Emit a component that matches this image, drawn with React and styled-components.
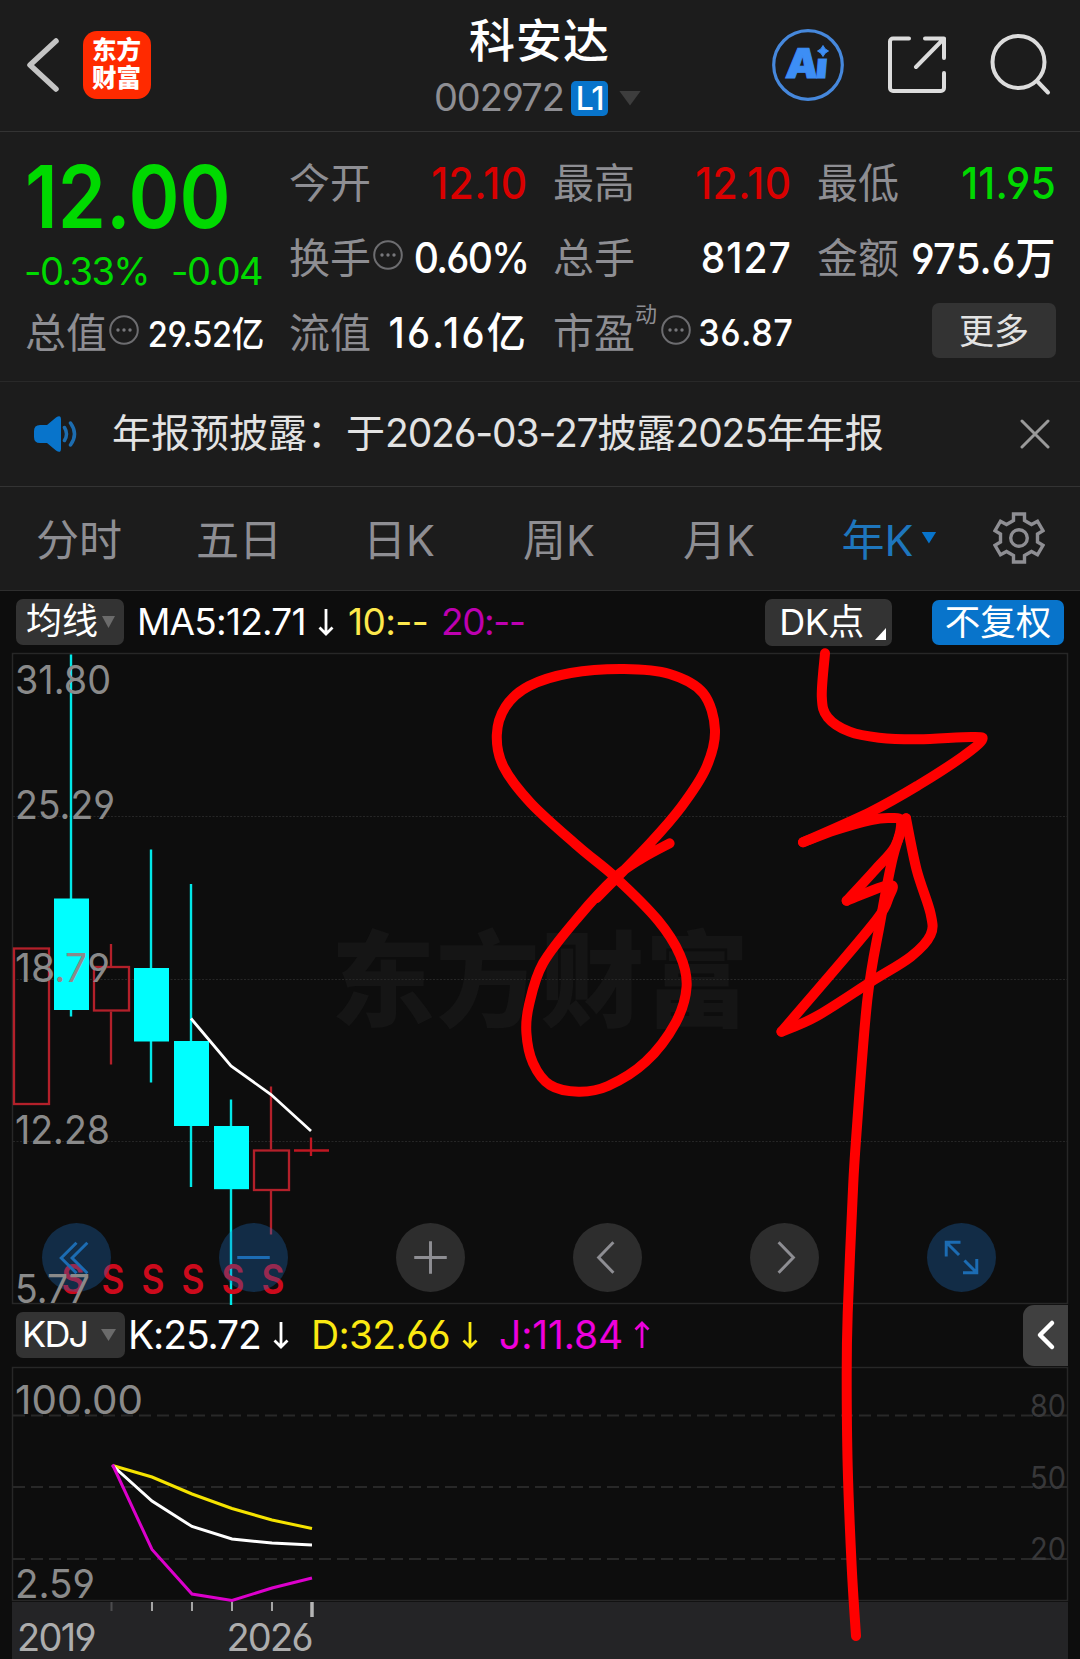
import React from 'react'
import styled, { createGlobalStyle } from 'styled-components'

const GREEN = '#00d900'
const RED = '#d90000'
const GREY = '#8e8e93'
const BLUE = '#0874cb'
const CYAN = '#00ffff'
const CANDLE_RED = '#b3202a'
const FONT = "Inter, 'Noto Sans CJK SC', sans-serif"

// yearly candles, in chart pixels
const candles = [
    { x: 31.5, up: true, top: 947, bottom: 1104.5, high: 947, low: 1104 },
    { x: 71, up: false, top: 898, bottom: 1009.5, high: 654, low: 1016 },
    { x: 111.5, up: true, top: 965.5, bottom: 1011, high: 943.5, low: 1064 },
    { x: 151, up: false, top: 967.5, bottom: 1041, high: 849, low: 1082 },
    { x: 191, up: false, top: 1040.5, bottom: 1125.5, high: 883.5, low: 1186.5 },
    { x: 231, up: false, top: 1125.5, bottom: 1188.7, high: 1099, low: 1304.5 },
    { x: 271.5, up: true, top: 1149, bottom: 1190.5, high: 1086, low: 1234 },
]

const priceLabels = [
    { text: '31.80', y: 693, x: 15, width: 96 },
    { text: '25.29', y: 818, x: 15, width: 100 },
    { text: '18.79', y: 981, x: 15, width: 95 },
    { text: '12.28', y: 1143, x: 15, width: 95 },
]

const figureEight = [
    [669.6, 843.3], [642, 858.3], [615.4, 877.3], [578.6, 916.7], [543, 963.3], [529, 1005], [526.4, 1033],
    [533, 1063], [550, 1085], [578.6, 1091.7], [608, 1086], [645.8, 1061.7], [675.5, 1023], [686.6, 986.7],
    [680, 955], [657.7, 920], [615.4, 877.3], [578.6, 846.7], [531, 803.3], [503.5, 766.7], [496.8, 735],
    [505.5, 706.7], [529, 686], [570.7, 673], [624, 669], [669.6, 674], [703, 693], [715, 730],
    [706, 768], [681.4, 806.7], [650, 843.3], [596.4, 898.3],
]

// each entry is one smooth run, the runs meet in sharp corners
const yearStroke = [
    [[825, 653.3], [821.8, 696.7], [827.7, 717.3], [849.5, 731.7], [879, 737.7], [918.7, 739.3], [972, 737], [982, 740], [962, 757], [918.7, 785], [871, 811.7], [803, 842.3]],
    [[803, 842.3], [835.6, 830], [871, 820], [891, 818], [901, 821.7], [895, 846.7], [875, 870], [846.7, 900.7]],
    [[846.7, 900.7], [889, 885], [889, 896.7], [871, 926.7], [781.5, 1031.7]],
    [[781.5, 1031.7], [815.9, 1016.7], [871, 981.7], [910.8, 956.7], [930.5, 935], [930.5, 913.3], [916.7, 870], [906, 818.3]],
    [[906, 818.3], [893, 856.7], [880, 923.3], [867.3, 1000], [856, 1140], [852.5, 1200], [847.7, 1313], [846.7, 1373], [847.7, 1466.7], [851.7, 1566.7], [856, 1636]],
]

const smooth = (pts) => {
    let d = `M${pts[0][0]} ${pts[0][1]}`
    for (let i = 0; i < pts.length - 1; i++) {
        const p0 = pts[i - 1] || pts[i]
        const p1 = pts[i]
        const p2 = pts[i + 1]
        const p3 = pts[i + 2] || p2
        d += `C${p1[0] + (p2[0] - p0[0]) / 6} ${p1[1] + (p2[1] - p0[1]) / 6} ${p2[0] - (p3[0] - p1[0]) / 6} ${p2[1] - (p3[1] - p1[1]) / 6} ${p2[0]} ${p2[1]}`
    }
    return d
}

const Candle = ({ x, up, top, bottom, high, low }) => {
    if (up) {
        return (
            <g stroke={CANDLE_RED} strokeWidth="2.300" fill="none">
                <rect x={x - 17.5} y={top + 1} width="35" height={bottom - top - 2} />
                <path d={`M${x - 0.5} ${high}V${top}M${x - 0.5} ${bottom}V${low}`} />
            </g>
        )
    }
    return (
        <g>
            <rect x={x - 1.2} y={high} width="2.400" height={low - high} fill={CYAN} opacity="0.9" />
            <rect x={x - 17} y={top} width="35" height={bottom - top} fill={CYAN} />
        </g>
    )
}

const MoreDots = () => (
    <DotsIcon viewBox="0 0 30 30">
        <circle cx="15" cy="15" r="13.8" fill="none" stroke="#6d6d70" strokeWidth="2" />
        <circle cx="9" cy="15" r="1.7" fill="#77777b" />
        <circle cx="15" cy="15" r="1.7" fill="#77777b" />
        <circle cx="21" cy="15" r="1.7" fill="#77777b" />
    </DotsIcon>
)

const Stat = ({ label, sup, info, value, color, size = 42, spacing = 1 }) => (
    <StatCell>
        <Label>{label}</Label>
        {sup && <Sup>{sup}</Sup>}
        {info && <MoreDots />}
        <Value $color={color} $size={size} $spacing={spacing}>{value}</Value>
    </StatCell>
)

const Arrow = ({ up, color }) => (
    <ArrowIcon viewBox="0 0 16 28">
        <path
            d={up ? 'M8 27V2M1.5 8.5L8 2l6.500 6.500' : 'M8 1v25M1.500 19.500L8 26l6.500-6.500'}
            fill="none" stroke={color} strokeWidth="2.8"
        />
    </ArrowIcon>
)

const App = () => {
    return (
        <Page>
            <GlobalStyle />
            <Header>
                <BackIcon viewBox="0 0 34 56">
                    <path d="M30 4L4 28l26 24" fill="none" stroke="#c4c4c4" strokeWidth="5.500" strokeLinecap="round" strokeLinejoin="round" />
                </BackIcon>
                <Logo>
                    <span>东方</span>
                    <span>财富</span>
                </Logo>
                <Title>
                    <h1>科安达</h1>
                    <CodeRow>
                        <span>002972</span>
                        <Level>L1</Level>
                        <Triangle $w={22} $h={15} $color="#3d3d3d" />
                    </CodeRow>
                </Title>
                <Actions>
                    <svg width="72" height="72" viewBox="0 0 72 72">
                        <circle cx="36" cy="36" r="34.300" fill="none" stroke="#4688dc" strokeWidth="3.200" />
                        <text y="49" fontSize="41" fontWeight="900" fill="#3d8ef5" stroke="#3d8ef5" transform="translate(4 0) skewX(-5)">
                            <tspan x="13">A</tspan>
                            <tspan x="43">i</tspan>
                        </text>
                        <rect x="43" y="16" width="15" height="13.500" fill="#1c1c1c" />
                        <path d="M51 16.500q1.500 4 5.500 5.500q-4 1.500-5.500 5.500q-1.500-4-5.500-5.500q4-1.500 5.500-5.500z" fill="#3d8ef5" stroke="#3d8ef5" />
                    </svg>
                    <svg width="58" height="58" viewBox="0 0 58 58" fill="none" stroke="#dcdcdc" strokeWidth="4" strokeLinecap="round" strokeLinejoin="round">
                        <path d="M21 2.500H5a3 3 0 0 0-3 3V52a3 3 0 0 0 3 3h48a3 3 0 0 0 3-3V37" />
                        <path d="M37 2.500h19V22M56 2.500L28 31" />
                    </svg>
                    <svg width="62" height="62" viewBox="0 0 62 62" fill="none" stroke="#dcdcdc" strokeWidth="4" strokeLinecap="round">
                        <circle cx="28.500" cy="28" r="26" />
                        <path d="M47 47l11 11.500" />
                    </svg>
                </Actions>
            </Header>

            <Quote>
                <PriceBlock>
                    <Price>12.00</Price>
                    <Change>
                        <span>-0.33%</span>
                        <span>-0.04</span>
                    </Change>
                </PriceBlock>
                <Stat label="今开" value="12.10" color={RED} size={44} spacing={0.4} />
                <Stat label="最高" value="12.10" color={RED} size={44} spacing={0.4} />
                <Stat label="最低" value="11.95" color={GREEN} size={44} spacing={0.2} />
                <Stat label="换手" info value="0.60%" spacing={-1.8} />
                <Stat label="总手" value="8127" />
                <Stat label="金额" value="975.6万" size={43} spacing={0.1} />
                <Stat label="总值" info value="29.52亿" size={35} spacing={-0.4} />
                <Stat label="流值" value="16.16亿" spacing={2.4} />
                <Stat label="市盈" sup="动" info value="36.87" size={37} spacing={0.5} />
                <MoreButton>更多</MoreButton>
            </Quote>

            <Notice>
                <svg width="44" height="38" viewBox="0 0 44 38">
                    <path d="M6 10h7L22 2.500q5-3.500 5 2v29q0 5.500-5 2L13 28H6q-6 0-6-6v-6q0-6 6-6z" fill={BLUE} />
                    <path d="M30.500 12.500q4 6.500 0 13M36.500 8q8 11 0 22" fill="none" stroke="#1d6db0" strokeWidth="3.500" strokeLinecap="round" />
                </svg>
                <NoticeText>
                    年报预披露：于<Digits>2026-03-27</Digits>披露<Digits>2025</Digits>年年报
                </NoticeText>
                <svg width="30" height="30" viewBox="0 0 30 30">
                    <path d="M2 2l26 26M28 2L2 28" stroke="#9a9a9a" strokeWidth="3" strokeLinecap="round" />
                </svg>
            </Notice>

            <Tabs>
                <Tab>分时</Tab>
                <Tab>五日</Tab>
                <Tab>日K</Tab>
                <Tab>周K</Tab>
                <Tab>月K</Tab>
                <Tab $active>年K<Triangle $w={15} $h={12} $color={BLUE} /></Tab>
                <GearCell>
                    <svg width="52" height="52" viewBox="0 0 52 52" fill="none" stroke={GREY} strokeWidth="3.400">
                        <path d="M20.500 2h11v6.500l7 4 6-3.300 5.500 9.500-5.500 3.300v8l5.500 3.300-5.500 9.500-6-3.300-7 4V50h-11v-6.500l-7-4-6 3.300L2 33.300 7.500 30v-8L2 18.700l5.500-9.500 6 3.300 7-4z" />
                        <circle cx="26" cy="26" r="8.300" />
                    </svg>
                </GearCell>
            </Tabs>

            <IndicatorBar $height={62}>
                <Picker $width={108}>均线<Triangle $w={13} $h={12} $color="#6b6b6b" /></Picker>
                <Reading $color="#fff" $left={13} $width={181}>MA5:12.71</Reading>
                <Arrow color="#fff" />
                <Reading $color="#fde84c" $left={14} $width={93} $spacing={-0.6}>10:--</Reading>
                <Reading $color="#bd00b0" $left={0} $width={90} $spacing={-1.4}>20:--</Reading>
                <DkButton>DK点</DkButton>
                <AdjustButton>不复权</AdjustButton>
            </IndicatorBar>

            <ChartWrap>
                <ChartCanvas width="1080" height="650" viewBox="0 652.500 1080 650">
                    <text x="331" y="1018" fontSize="104" fontWeight="900" fill="#151515" textLength="418">东方财富</text>
                    <path d="M12.500 1303V653H1067.500V1303z" fill="none" stroke="#272727" strokeWidth="1.500" />
                    <path d="M13 816H1067M13 979H1067M13 1141H1067" stroke="#262626" strokeDasharray="2 1.500" />
                    {candles.map((c) => <Candle key={c.x} {...c} />)}
                    <path d="M311 1137v18.500M294 1150h35" stroke="#c01722" strokeWidth="2.300" />
                    <path d="M191 1018L231 1065.500L271 1094L311 1130.500" fill="none" stroke="#fff" strokeWidth="2.800" />
                    {[73, 113, 153, 193, 233, 273].map((x) => (
                        <text key={x} x={x} y="1293.500" fontSize="41" fontWeight="600" fill="#cc0a1c" textAnchor="middle" textLength="23" lengthAdjust="spacingAndGlyphs">S</text>
                    ))}
                </ChartCanvas>
                <ChartControls>
                    <RoundButton $blue>
                        <svg viewBox="0 0 70 70"><path d="M35 20L19.500 35.500 35 51M46 20L30.500 35.500 46 51" /></svg>
                    </RoundButton>
                    <RoundButton $blue>
                        <svg viewBox="0 0 70 70"><path d="M18.500 35h33" /></svg>
                    </RoundButton>
                    <RoundButton>
                        <svg viewBox="0 0 70 70"><path d="M18.500 35h33M35 18.500v33" /></svg>
                    </RoundButton>
                    <RoundButton>
                        <svg viewBox="0 0 70 70"><path d="M41 19.500L26 35l15 15.500" /></svg>
                    </RoundButton>
                    <RoundButton>
                        <svg viewBox="0 0 70 70"><path d="M29 19.500L44 35 29 50.500" /></svg>
                    </RoundButton>
                    <RoundButton $blue>
                        <svg viewBox="0 0 70 70"><path d="M19.500 34V19.500H34M20 20l12.500 12.500M50.500 36.500V50.500H36.500M50 50L38 38" /></svg>
                    </RoundButton>
                </ChartControls>
                <AxisLabels width="1080" height="650" viewBox="0 652.500 1080 650">
                    {priceLabels.map((l) => (
                        <text key={l.text} x={l.x} y={l.y} textLength={l.width} lengthAdjust="spacingAndGlyphs">{l.text}</text>
                    ))}
                    <text x="15" y="1302" textLength="75" lengthAdjust="spacingAndGlyphs">5.77</text>
                </AxisLabels>
            </ChartWrap>

            <IndicatorBar $height={64}>
                <Picker $width={109} $spacing={-1.8}>KDJ<Triangle $w={15} $h={12} $color="#6b6b6b" /></Picker>
                <Reading $color="#fff" $left={3} $width={145} $size={39} $spacing={-1.1}>K:25.72</Reading>
                <Arrow color="#fff" />
                <Reading $color="#fbe912" $left={22} $width={151} $size={39} $spacing={-0.7}>D:32.66</Reading>
                <Arrow color="#fbe912" />
                <Reading $color="#ee00dc" $left={21} $width={135} $size={39} $spacing={-0.1}>J:11.84</Reading>
                <Arrow up color="#ee00dc" />
                <SideHandle>
                    <svg width="20" height="32" viewBox="0 0 20 32">
                        <path d="M16 4L4 16l12 12" fill="none" stroke="#fff" strokeWidth="4.500" strokeLinecap="round" strokeLinejoin="round" />
                    </svg>
                </SideHandle>
            </IndicatorBar>

            <ChartCanvas width="1080" height="235" viewBox="0 1366.500 1080 235">
                <path d="M12.500 1600V1367H1067.500V1600z" fill="none" stroke="#272727" strokeWidth="1.500" />
                <path d="M13 1415H1067M13 1486.500H1067M13 1558.500H1067" stroke="#282828" strokeWidth="2" strokeDasharray="12 6" />
                <AxisText x="15" y="1413" textLength="128" lengthAdjust="spacingAndGlyphs">100.00</AxisText>
                <AxisText x="15" y="1597.500" textLength="80" lengthAdjust="spacingAndGlyphs">2.59</AxisText>
                <LevelText x="1030" y="1416" textLength="36" lengthAdjust="spacingAndGlyphs">80</LevelText>
                <LevelText x="1030" y="1488" textLength="36" lengthAdjust="spacingAndGlyphs">50</LevelText>
                <LevelText x="1030" y="1559" textLength="36" lengthAdjust="spacingAndGlyphs">20</LevelText>
                <g fill="none" strokeWidth="3">
                    <path d="M112.500 1465L152 1476.500 192 1493.500 232 1508 272 1519.500 312 1528" stroke="#f5e300" />
                    <path d="M112.500 1465L152 1500.500 192 1526 232 1538.500 272 1542.500 312 1544.500" stroke="#fff" />
                    <path d="M112.500 1464L152 1549 192 1593.500 232 1600 272 1587.500 312 1577.500" stroke="#dc00cc" />
                </g>
            </ChartCanvas>

            <TimeAxis>
                <svg width="320" height="16" viewBox="0 0 320 16">
                    <path d="M99.500 0v9" stroke="#4c4c4e" strokeWidth="2" />
                    <path d="M140 0v9M180 0v9M220 0v9M260 0v9" stroke="#a5a5a5" strokeWidth="2" />
                    <path d="M300 0v15" stroke="#b5b5b5" strokeWidth="3.500" />
                </svg>
                <Years>
                    <span>2019</span>
                    <span>2026</span>
                </Years>
            </TimeAxis>

            <Handwriting viewBox="0 0 1080 1659">
                <path d={smooth(figureEight)} />
                {yearStroke.map((run, i) => <path key={i} d={smooth(run)} />)}
            </Handwriting>
        </Page>
    )
}

export default App

const GlobalStyle = createGlobalStyle`
    body {
        margin: 0;
        background: #0d0d0d;
        overflow: hidden;
    }

    * {
        box-sizing: border-box;
    }

    button {
        font-family: inherit;
        line-height: inherit;
        border: none;
        padding: 0;
    }

    svg {
        display: block;
        flex-shrink: 0;
    }
`

const Page = styled.div`
    position: relative;
    width: 1080px;
    height: 1659px;
    overflow: hidden;
    display: flex;
    flex-direction: column;
    background: #0d0d0d;
    font-family: ${FONT};
    font-feature-settings: 'cv03', 'cv04', 'kern';
    line-height: 1.2;
    white-space: nowrap;
`

const Header = styled.header`
    display: grid;
    grid-template-columns: 57px 68px 1fr auto;
    align-items: center;
    flex-shrink: 0;
    height: 132px;
    padding: 0 28px 2px 26px;
    background: #1c1c1c;
    border-bottom: 1px solid #333;
`

const BackIcon = styled.svg`
    width: 34px;
    height: 56px;
`

const Logo = styled.div`
    height: 68px;
    border-radius: 14px;
    background: #ff2a00;
    color: #fff;
    font-size: 24.5px;
    font-weight: 900;
    line-height: 28px;
    padding: 5px 0 0 9px;

    span {
        display: block;
    }
`

const Title = styled.div`
    display: flex;
    flex-direction: column;
    padding-left: 283px;
    padding-top: 8px;

    h1 {
        margin: 0 0 0 35px;
        color: #fff;
        font-size: 46px;
        font-weight: 500;
        line-height: 57px;
        letter-spacing: 1px;
    }
`

const CodeRow = styled.div`
    display: flex;
    align-items: center;
    height: 56px;
    padding-top: 2px;
    color: ${GREY};
    font-size: 38px;
    letter-spacing: -1.1px;

    & > span {
        width: 137px;
    }
`

const Level = styled.div`
    width: 37px;
    height: 35px;
    margin-right: 11px;
    border-radius: 5px;
    background: ${BLUE};
    color: #fff;
    font-size: 32px;
    font-weight: 500;
    line-height: 35px;
    text-align: center;
`

const Triangle = styled.i`
    width: ${(p) => p.$w}px;
    height: ${(p) => p.$h}px;
    background: ${(p) => p.$color};
    clip-path: polygon(0 0, 100% 0, 50% 100%);
`

const Actions = styled.div`
    display: flex;
    align-items: center;
    gap: 44px;
`

const Quote = styled.section`
    display: grid;
    grid-template-columns: repeat(4, 237px);
    grid-template-rows: repeat(3, 75px);
    column-gap: 27px;
    flex-shrink: 0;
    height: 250px;
    padding: 14px 25px 0 26px;
    background: #1c1c1c;
    border-bottom: 1px solid #292929;
`

const PriceBlock = styled.div`
    grid-row: span 2;
    padding-top: 1px;
    color: ${GREEN};
`

const Price = styled.div`
    margin-left: -1px;
    font-size: 87px;
    font-weight: 600;
    line-height: 100px;
    transform: scaleX(0.89);
    transform-origin: left;
`

const Change = styled.div`
    display: flex;
    justify-content: space-between;
    margin-left: -2px;
    padding-right: 1px;
    font-size: 38px;
    line-height: 48px;
    letter-spacing: -1.6px;
`

const StatCell = styled.div`
    display: flex;
    align-items: center;
`

const Label = styled.span`
    margin-left: -1px;
    color: ${GREY};
    font-size: 41px;
`

const Sup = styled.sup`
    align-self: flex-start;
    margin-top: 5px;
    margin-right: 2px;
    color: ${GREY};
    font-size: 22px;
    line-height: 26px;
`

const DotsIcon = styled.svg`
    width: 30px;
    height: 30px;
    margin: -8px 0 0 2px;
`

const Value = styled.span`
    margin-left: auto;
    margin-right: -1px;
    color: ${(p) => p.$color || '#fff'};
    font-size: ${(p) => p.$size}px;
    font-weight: 450;
    letter-spacing: ${(p) => p.$spacing}px;
    transform: scaleX(0.93);
    transform-origin: right;
`

const MoreButton = styled.button`
    justify-self: end;
    align-self: center;
    width: 124px;
    height: 55px;
    margin-bottom: 6px;
    margin-right: -1px;
    border-radius: 7px;
    background: #333;
    color: #e3e3e3;
    font-size: 35px;
`

const Notice = styled.section`
    display: flex;
    align-items: center;
    flex-shrink: 0;
    height: 105px;
    padding: 0 30px 1px 34px;
    background: #1c1c1c;
    border-bottom: 1px solid #333;
`

const NoticeText = styled.p`
    flex: 1;
    margin: 0 0 0 34px;
    color: #e3e3e3;
    font-size: 39px;
`

const Digits = styled.span`
    letter-spacing: -1.15px;
`

const Tabs = styled.nav`
    display: grid;
    grid-template-columns: repeat(6, 160px) 1fr;
    flex-shrink: 0;
    height: 104px;
    background: #1c1c1c;
    border-bottom: 1px solid #2e2e2e;
`

const Tab = styled.div`
    display: flex;
    align-items: center;
    justify-content: center;
    padding-top: 4px;
    padding-left: ${(p) => (p.$active ? 20 : 0)}px;
    padding-right: 2px;
    color: ${(p) => (p.$active ? '#1e76bd' : GREY)};
    font-size: 43px;

    i {
        margin: -6px 0 0 8px;
    }
`

const GearCell = styled.div`
    display: flex;
    align-items: center;
    justify-content: center;
    padding: 0 3px 1px 0;
`

const IndicatorBar = styled.div`
    display: flex;
    align-items: center;
    flex-shrink: 0;
    height: ${(p) => p.$height}px;
    padding-left: 16px;
`

const Picker = styled.button`
    display: flex;
    align-items: center;
    justify-content: space-between;
    flex-shrink: 0;
    width: ${(p) => p.$width}px;
    height: 46px;
    padding: 0 9px 0 ${(p) => (p.$spacing ? 6 : 10)}px;
    border-radius: 7px;
    background: #333;
    color: #fff;
    font-size: 36px;
    letter-spacing: ${(p) => p.$spacing || 0}px;
`

const Reading = styled.span`
    flex-shrink: 0;
    width: ${(p) => p.$width}px;
    margin-left: ${(p) => p.$left}px;
    padding-top: 1px;
    color: ${(p) => p.$color};
    font-size: ${(p) => p.$size || 37}px;
    letter-spacing: ${(p) => p.$spacing || -0.8}px;
`

const ArrowIcon = styled.svg`
    width: 16px;
    height: 28px;
`

const DkButton = styled.button`
    position: relative;
    width: 127px;
    height: 47px;
    margin-left: auto;
    margin-right: 40px;
    padding: 2px 14px 0 0;
    border-radius: 7px;
    background: #333;
    color: #fff;
    font-size: 36px;
    letter-spacing: -0.5px;

    &::after {
        content: '';
        position: absolute;
        right: 6px;
        bottom: 6px;
        border-left: 11px solid transparent;
        border-bottom: 12px solid #fff;
    }
`

const AdjustButton = styled.button`
    width: 132px;
    height: 45px;
    margin-right: 16px;
    padding-top: 2px;
    border-radius: 7px;
    background: ${BLUE};
    color: #fff;
    font-size: 35.5px;
`

const ChartWrap = styled.div`
    position: relative;
    height: 650px;
    flex-shrink: 0;
`

const ChartCanvas = styled.svg`
    overflow: visible;
`

const ChartControls = styled.div`
    position: absolute;
    left: 42px;
    bottom: 11px;
    display: flex;
    gap: 108px;
`

const RoundButton = styled.button`
    width: 69px;
    height: 69px;
    border-radius: 50%;
    background: ${(p) => (p.$blue ? 'rgba(30, 116, 202, 0.3)' : 'rgba(120, 120, 120, 0.3)')};

    svg {
        width: 69px;
        height: 69px;
        fill: none;
        stroke: ${(p) => (p.$blue ? '#1c6cb3' : '#8e8e93')};
        stroke-width: 3;
    }
`

const AxisLabels = styled.svg`
    position: absolute;
    top: 0;
    left: 0;
    overflow: visible;
    font-size: 40px;
    fill: #8a8a8a;
`

const AxisText = styled.text`
    font-size: 40px;
    fill: #8a8a8a;
`

const LevelText = styled.text`
    font-size: 31px;
    fill: #38383a;
`

const SideHandle = styled.div`
    display: flex;
    align-items: center;
    justify-content: center;
    width: 45px;
    height: 61px;
    margin-left: auto;
    margin-right: 12px;
    border-radius: 11px 0 0 11px;
    background: #404040;
`

const TimeAxis = styled.div`
    flex: 1;
    margin: 0 12px;
    background: #242426;
`

const Years = styled.div`
    display: flex;
    justify-content: space-between;
    width: 300px;
    padding-left: 5px;
    color: #adadad;
    font-size: 38px;
    line-height: 39px;
    letter-spacing: -1.7px;
`

const Handwriting = styled.svg`
    position: absolute;
    top: 0;
    left: 0;
    width: 1080px;
    height: 1659px;
    fill: none;
    stroke: #ff0000;
    stroke-width: 10px;
    stroke-linecap: round;
    stroke-linejoin: round;
    pointer-events: none;
`
